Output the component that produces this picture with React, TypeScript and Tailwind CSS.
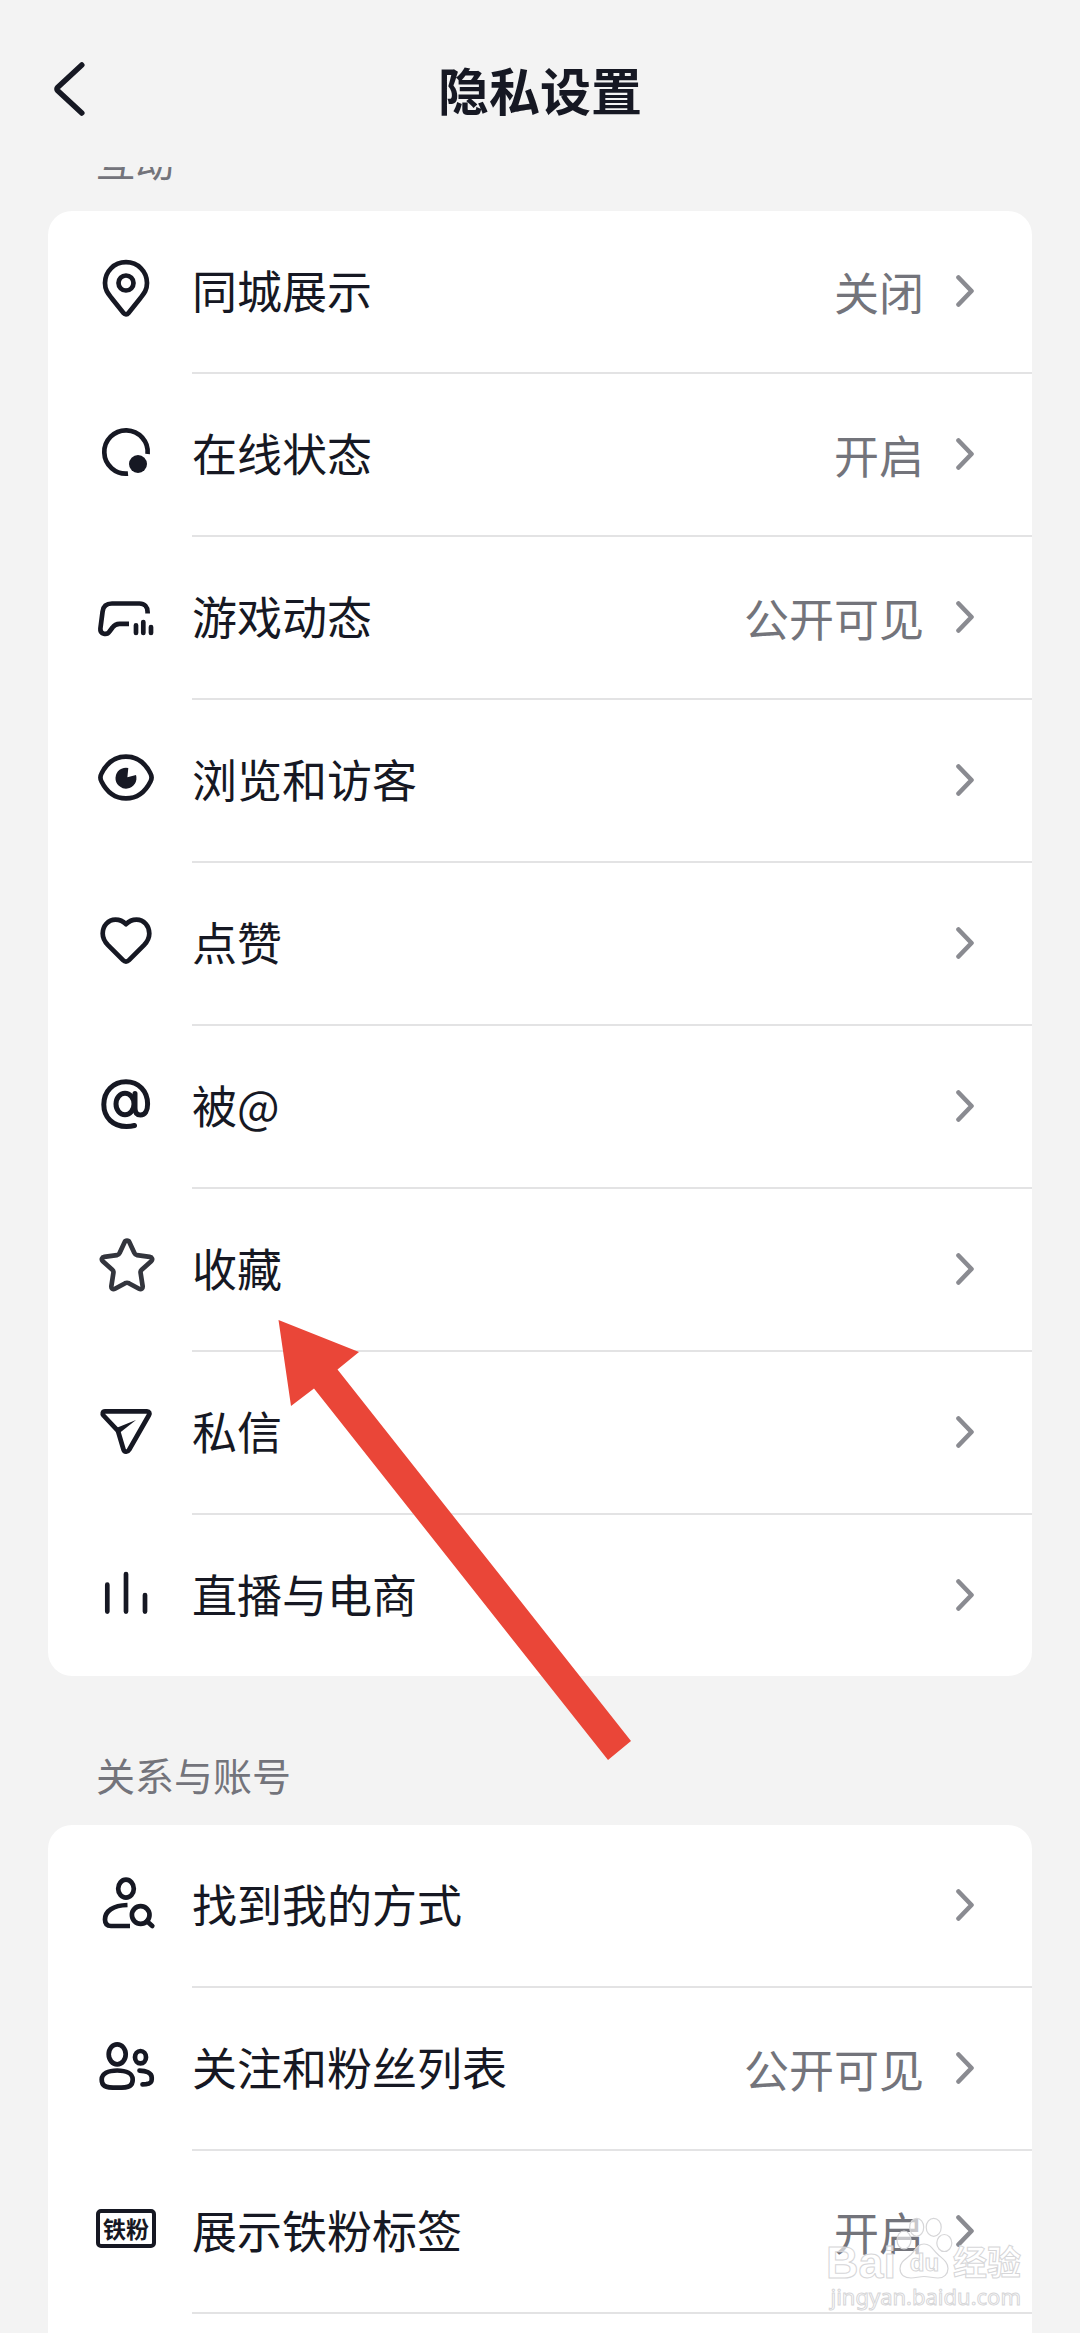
import type { ReactNode } from "react";

interface SettingItem {
    id: string;
    label: string;
    value?: string;
    icon: ReactNode;
}

interface SettingGroup {
    title: string;
    items: SettingItem[];
}

function Icon({ children, className = "text-[#161823]" }: { children: ReactNode; className?: string }) {
    return (
        <svg
            className={`w-[60px] h-[65px] ${className}`}
            viewBox="0 0 60 65"
            fill="none"
            stroke="currentColor"
            strokeWidth="4.7"
            strokeLinejoin="round"
            aria-hidden="true"
        >
            {children}
        </svg>
    );
}

const PinIcon = () => (
    <Icon>
        <path d="M30 3.2C18 3.2 9 12.6 9 24c0 7 3 10.5 6.5 15L27.5 54c1.3 1.7 3.7 1.7 5 0L44.5 39c3.5-4.5 6.5-8 6.5-15C51 12.6 42 3.2 30 3.2z" />
        <circle cx="30" cy="24" r="7.5" />
    </Icon>
);

const StatusIcon = () => (
    <Icon>
        <path d="M51.6 32A21.7 21.7 0 1 0 32 51.6" />
        <circle cx="42" cy="42" r="9" fill="currentColor" stroke="none" />
    </Icon>
);

const GameIcon = () => (
    <Icon>
        <path d="M51.6 28.5V27C51.6 22 48.5 18.5 43.5 18.5H16C10.5 18.5 7.2 21.5 6.6 26.5L4.4 43.5C3.8 49.5 11 50.5 13.5 46.5L16.5 42.5C18.5 39.5 20.5 38.8 23.5 38.8H33" />
        <path d="M40 40.3V48M47.3 37V48M55 42V48" strokeWidth="4.7" strokeLinecap="round" />
    </Icon>
);

const EyeIcon = () => (
    <Icon>
        <path d="M30 8.6C41 8.6 49 14.5 54.5 25.5c1.6 3 1.6 5 0 8C49 44.5 41 50.4 30 50.4S11 44.5 5.5 33.5c-1.6-3-1.6-5 0-8C11 14.5 19 8.6 30 8.6z" />
        <path d="M32.3 19.9L31.4 29.2L40 27A10.5 10.5 0 1 1 32.3 19.9z" fill="currentColor" stroke="none" />
    </Icon>
);

const HeartIcon = () => (
    <Icon>
        <path d="M30 13.2C26.5 9.5 22.5 8.6 19.5 8.6C12 8.6 6.7 15 6.7 22.5C6.7 27.5 9 31 12 34.2L27 49.2C28.8 51 31.2 51 33 49.2L48 34.2C51 31 53.3 27.5 53.3 22.5C53.3 15 48 8.6 40.5 8.6C37.5 8.6 33.5 9.5 30 13.2z" />
    </Icon>
);

const MentionIcon = () => (
    <Icon>
        <ellipse cx="29" cy="30" rx="9" ry="10.7" strokeWidth="5" />
        <path
            d="M39 19.5V34C39 38.5 41 41 44.5 41C49 41 51.6 37 51.6 30C51.6 17 42.5 7.8 30 7.8C17 7.8 7.8 17.5 7.8 30.5C7.8 43.5 17 52.5 30.5 52.5C33.5 52.5 36 52.2 38.5 51.5"
            strokeWidth="5"
            strokeLinecap="round"
        />
    </Icon>
);

const StarIcon = () => (
    <Icon className="text-[#33353d]">
        <path d="M28.6 5.2C29.5 3.2 32.5 3.2 33.4 5.2L38.5 16.2C39 17.4 39.8 18 41 18.2L53.8 19.9C56 20.2 57 22.6 55.2 24.2L45.7 32.8C44.8 33.6 44.4 34.6 44.6 35.8L46.6 48.8C47 51.4 45.2 53 43 51.8L32.8 46.2C31.6 45.6 30.4 45.6 29.2 46.2L19 51.8C16.8 53 15 51.4 15.4 48.8L17.4 35.8C17.6 34.6 17.2 33.6 16.3 32.8L6.8 24.2C5 22.6 6 20.2 8.2 19.9L21 18.2C22.2 18 23 17.4 23.5 16.2z" />
    </Icon>
);

const SendIcon = () => (
    <Icon>
        <path d="M9 11.3H51C53.3 11.3 54 13.2 53 15L33 50C31.7 52.4 28.3 52.2 27.5 49.5L22.3 32C22 31 21.5 30.3 20.8 29.6L7.5 15.5C6 14 6.6 11.3 9 11.3z" />
        <path d="M19 28.5L40 20L23.5 33z" fill="currentColor" stroke="none" />
    </Icon>
);

const LiveIcon = () => (
    <Icon>
        <path d="M11.3 21.7V48.6M30 11V48.6M49 32V48.6" strokeLinecap="round" />
    </Icon>
);

const FindMeIcon = () => (
    <Icon>
        <ellipse cx="30" cy="15.7" rx="7.8" ry="9" />
        <path d="M31.5 32C17 32.4 9 38 9 46.5C9 50.5 11 53 15 53H34" />
        <circle cx="44.7" cy="42" r="8.8" />
        <path d="M51 48.3L56.3 53" strokeLinecap="round" />
    </Icon>
);

const FollowersIcon = () => (
    <Icon>
        <ellipse cx="21.2" cy="18.3" rx="8.5" ry="10" />
        <path d="M21.2 34.5C12 34.5 5.7 37.5 5.7 43.5C5.7 49.5 8 51.7 21.2 51.7S36.7 49.5 36.7 43.5C36.7 37.5 30.4 34.5 21.2 34.5z" />
        <ellipse cx="44.5" cy="21.2" rx="5.5" ry="6.2" />
        <path d="M43.5 34.6C50 34.8 55.7 37 55.7 41.5V43.5C55.7 47 53.5 47.8 50 48.1L46.5 48.3" strokeLinecap="round" />
    </Icon>
);

const FanBadgeIcon = () => (
    <span className="flex w-[60px] h-[65px] items-center pb-[6px]">
        <span className="flex h-[39px] w-full items-center justify-center rounded-[5px] border-4 border-[#161823] text-[23px] leading-none font-bold text-[#161823]">
            铁粉
        </span>
    </span>
);

const GROUPS: SettingGroup[] = [
    {
        title: "互动",
        items: [
            { id: "city", label: "同城展示", value: "关闭", icon: <PinIcon /> },
            { id: "online", label: "在线状态", value: "开启", icon: <StatusIcon /> },
            { id: "game", label: "游戏动态", value: "公开可见", icon: <GameIcon /> },
            { id: "visitors", label: "浏览和访客", icon: <EyeIcon /> },
            { id: "likes", label: "点赞", icon: <HeartIcon /> },
            { id: "mentions", label: "被@", icon: <MentionIcon /> },
            { id: "favorites", label: "收藏", icon: <StarIcon /> },
            { id: "messages", label: "私信", icon: <SendIcon /> },
            { id: "live", label: "直播与电商", icon: <LiveIcon /> },
        ],
    },
    {
        title: "关系与账号",
        items: [
            { id: "find-me", label: "找到我的方式", icon: <FindMeIcon /> },
            { id: "followers", label: "关注和粉丝列表", value: "公开可见", icon: <FollowersIcon /> },
            { id: "fan-badge", label: "展示铁粉标签", value: "开启", icon: <FanBadgeIcon /> },
        ],
    },
];

function SettingRow({ item, divider }: { item: SettingItem; divider: boolean }) {
    return (
        <li>
            <button type="button" className="flex w-full items-stretch gap-9 pl-12 text-left">
                <span className="flex h-[161px] shrink-0 items-center">{item.icon}</span>
                <span
                    className={`flex flex-1 items-center justify-between pr-[58px] pb-0.5 ${
                        divider ? "h-[163px] border-b-2 border-[#e3e3e4]" : "h-[161px]"
                    }`}
                >
                    <span className="pb-0.5 text-[45px] leading-[66px] text-[#161823]">{item.label}</span>
                    <span className="flex items-center gap-8">
                        {item.value && (
                            <span className="pt-0.5 text-[45px] leading-[66px] text-[#73747b]">{item.value}</span>
                        )}
                        <svg
                            className="h-8 w-[18px] text-[#8a8b91]"
                            viewBox="0 0 18 32"
                            fill="none"
                            stroke="currentColor"
                            strokeWidth="4.6"
                            strokeLinecap="round"
                            strokeLinejoin="round"
                            aria-hidden="true"
                        >
                            <path d="M2.5 2.5L15.5 16L2.5 29.5" />
                        </svg>
                    </span>
                </span>
            </button>
        </li>
    );
}

function Watermark() {
    return (
        <div className="pointer-events-none absolute right-[59px] bottom-6 flex flex-col items-end text-white/60 [-webkit-text-stroke:1px_#d6d6d8]">
            <div className="flex items-end font-bold">
                <span className="font-['Liberation_Sans'] text-[45px] leading-[40px]">Bai</span>
                <span className="relative mb-1">
                    <svg
                        className="h-[62px] w-[57px]"
                        viewBox="0 0 57 62"
                        fill="#ffffff"
                        fillOpacity="0.6"
                        stroke="#d6d6d8"
                        strokeWidth="1.2"
                        aria-hidden="true"
                    >
                        <ellipse cx="20.7" cy="10.3" rx="7" ry="9" />
                        <ellipse cx="37.7" cy="10.3" rx="7.5" ry="9" />
                        <ellipse cx="8" cy="23" rx="7" ry="9" />
                        <ellipse cx="48.3" cy="26" rx="7.5" ry="8.5" />
                        <path d="M28 27C21 27 19.5 33 15 37.5C10 42 4 44.5 4 51.5C4 58 9 61 15 61C20 61 23 59.5 28 59.5S37 61 42 61C48 61 52 57 52 51.5C52 45 47 42 42 37.5C37 33 35 27 28 27z" />
                    </svg>
                    <span className="absolute inset-x-0 bottom-1 text-center font-['Liberation_Sans'] text-[24px] leading-6">
                        du
                    </span>
                </span>
                <span className="text-[34px] leading-[44px]">经验</span>
            </div>
            <span className="font-['Noto_Sans'] text-[22px] leading-[26px]">jingyan.baidu.com</span>
        </div>
    );
}

export default function App() {
    return (
        <div className="relative flex h-screen flex-col overflow-hidden bg-[#f3f3f3] font-['Noto_Sans_CJK_SC',sans-serif]">
            {/* Header covers the top of the scrolled list */}
            <header className="absolute inset-x-0 top-0 z-10 grid h-[167px] grid-cols-[1fr_auto_1fr] items-center bg-[#f3f3f3] px-[54px] pt-[11px]">
                <button type="button" aria-label="返回" className="justify-self-start">
                    <svg
                        className="h-[54px] w-8 text-[#161823]"
                        viewBox="0 0 32 54"
                        fill="none"
                        stroke="currentColor"
                        strokeWidth="5.5"
                        strokeLinecap="round"
                        strokeLinejoin="round"
                        aria-hidden="true"
                    >
                        <path d="M27.8 3L3.8 25.2C2.6 26.4 2.6 27.6 3.8 28.8L27.8 51" />
                    </svg>
                </button>
                <h1 className="text-[51px] leading-[74px] font-bold text-[#161823]">隐私设置</h1>
            </header>

            <main className="flex flex-1 flex-col px-12 pt-[62px]">
                {GROUPS.map((group, idx) => {
                    const last = idx === GROUPS.length - 1;
                    return (
                        <section key={group.title} className={last ? "flex flex-1 flex-col" : "flex flex-col"}>
                            <h2 className="flex h-[149px] shrink-0 items-end px-12 pb-[22px] text-[39px] leading-[58px] text-[#73747b]">
                                {group.title}
                            </h2>
                            <ul className={last ? "flex-1 rounded-t-3xl bg-white" : "rounded-3xl bg-white"}>
                                {group.items.map((item, i) => (
                                    <SettingRow
                                        key={item.id}
                                        item={item}
                                        divider={last || i < group.items.length - 1}
                                    />
                                ))}
                            </ul>
                        </section>
                    );
                })}
            </main>

            {/* Pointer to the 收藏 row */}
            <svg
                className="pointer-events-none absolute top-[1320px] left-[278px] h-[440px] w-[354px]"
                viewBox="0 0 354 440"
                aria-hidden="true"
            >
                <path d="M.5 0L81 32L59.5 49.5L353 421L330 440L36 68.5L13 86z" fill="#ea4638" />
            </svg>

            <Watermark />
        </div>
    );
}
